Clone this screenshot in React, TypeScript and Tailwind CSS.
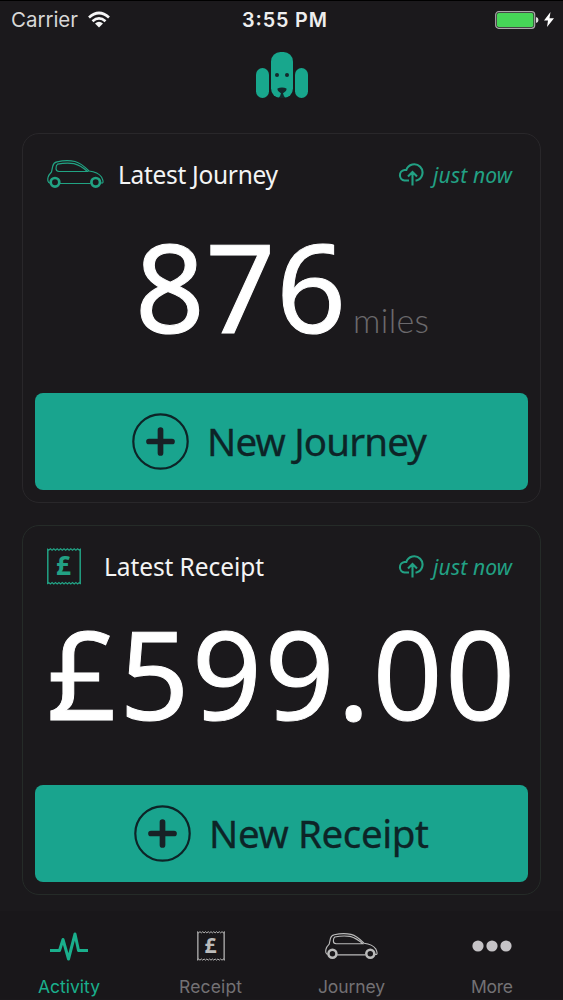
import React from 'react';

type TextProps = { children: string; y: number; height: number; size: number; width: number; className?: string };

function FitText({ children, size, width, height, y, className = '' }: TextProps) {
  return (
    <svg width={width} height={height} className="block shrink-0 overflow-visible">
      <text x="0" y={y} fontSize={size} textLength={width} fill="currentColor" className={className}>
        {children}
      </text>
    </svg>
  );
}

function Car({ className = '' }: { className?: string }) {
  return (
    <svg viewBox="0 0 57 29" fill="none" stroke="currentColor" strokeWidth="1.2" className={className}>
      <path d="M3 23C.8 23 .5 20 1 17.500Q1.500 15 4.500 12L5.800 6Q6.500 2.500 10 1.800Q20-.3 28 1.500Q34 3 42 11Q51 12 54.500 17Q57 22 55.500 23H53.500M13 23.500H43.500" />
      <path d="M10.500 4.200Q19 2.500 27 3.600Q34 5.500 40.500 11.500H12Q9 11.300 9 8.500Q9 5.200 10.500 4.200Z" />
      <circle cx="8" cy="22.300" r="4.300" strokeWidth="2.700" />
      <circle cx="48.700" cy="22.300" r="4.300" strokeWidth="2.700" />
    </svg>
  );
}

function ReceiptIcon({ className = '' }: { className?: string }) {
  return (
    <svg viewBox="0 0 34 37" className={className}>
      <path d="M.8 1V36M33.200 1V36" stroke="currentColor" strokeWidth="1.500" />
      <path d="M0 .8l1.700 1.500 1.700-1.500 1.700 1.500 1.700-1.500 1.700 1.500 1.700-1.500 1.700 1.500 1.700-1.500 1.700 1.500 1.700-1.500 1.700 1.500 1.700-1.500 1.700 1.500 1.700-1.500 1.700 1.500 1.700-1.500 1.700 1.500 1.700-1.500 1.700 1.500 1.700-1.500M0 36l1.700-1.500 1.700 1.500 1.700-1.500 1.700 1.500 1.700-1.500 1.700 1.500 1.700-1.500 1.700 1.500 1.700-1.500 1.700 1.500 1.700-1.500 1.700 1.500 1.700-1.500 1.700 1.500 1.700-1.500 1.700 1.500 1.700-1.500 1.700 1.500 1.700-1.500 1.700 1.500" fill="none" stroke="currentColor" strokeWidth="1.200" />
      <text x="16.500" y="27" textAnchor="middle" fontSize="26" fontWeight="700" fill="currentColor" className="font-['Noto_Sans',sans-serif]">£</text>
    </svg>
  );
}

function Synced() {
  return (
    <div className="flex items-center text-[#22a184]">
      <svg viewBox="0 0 26 24" fill="none" stroke="currentColor" strokeWidth="2.1" className="mr-[9px] h-[24px] w-[26px]">
        <path d="M11 18.500H6.500A5.300 5.300 0 0 1 6.500 8H8.300A8.300 8.300 0 1 1 18.500 18.500H17.500M14.500 23.500V10.500M10 14.500L14.500 10L19 14.500" />
      </svg>
      <FitText size={21} width={79} y={24} height={31} className="italic font-['Noto_Sans',sans-serif]">just now</FitText>
    </div>
  );
}

function ActionButton({ label, width, className }: { label: string; width: number; className: string }) {
  return (
    <button className={`flex h-[97px] w-full items-center rounded-lg bg-[#19a48e] text-[#0d2427] ${className}`}>
      <svg viewBox="0 0 57 57" fill="none" stroke="currentColor" className="mr-[18px] h-[57px] w-[57px]">
        <circle cx="28.500" cy="28.500" r="27.200" strokeWidth="2.200" />
        <path d="M17 28.500H40M28.500 17V40" strokeWidth="5.700" strokeLinecap="round" stroke="#182126" />
      </svg>
      <FitText size={38.5} width={width} y={43} height={58} className="stroke-[#0d2427] [stroke-width:0.3px] font-['Noto_Sans',sans-serif]">{label}</FitText>
    </button>
  );
}

export default function App() {
  return (
    <div className="flex h-[1000px] w-[563px] flex-col overflow-hidden border-t border-black bg-[#1b191c] font-['Noto_Sans',sans-serif]">
      <header className="flex h-[38px] items-center justify-between pr-[9px] pl-[11px] font-['Inter',sans-serif] text-[#eee]">
        <div className="flex w-[182px] items-center gap-[9px] text-[#d8d8d8]">
          <FitText size={20.5} width={67} y={20} height={26.400}>Carrier</FitText>
          <svg viewBox="0 0 24 18" className="h-[18px] w-[24px]" fill="none" stroke="#f5f5f5" strokeWidth="2.700">
            <path d="M2 6.500Q12-2.500 22 6.500M5.500 10.200Q12 4.500 18.500 10.200" />
            <path d="M12 16.500L8 12.500Q12 9 16 12.500Z" fill="#f5f5f5" stroke="none" />
          </svg>
        </div>
        <FitText size={19.8} width={85} y={20} height={26.400} className="font-semibold">3:55 PM</FitText>
        <div className="flex w-[178px] items-center justify-end gap-[5px] pb-[1px]">
          <svg viewBox="0 0 44 18" className="h-[18px] w-[44px]">
            <rect x=".7" y=".7" width="39" height="16.600" rx="3" fill="#242424" stroke="#aaa" strokeWidth="1.200" />
            <rect x="2" y="2" width="36.400" height="14" rx="1.700" fill="#46d657" />
            <path d="M41 6Q43.500 6.500 43.500 9T41 12Z" fill="#ddd" />
          </svg>
          <svg viewBox="0 0 10 15" className="h-[15px] w-[10px]" fill="#fff"><path d="M6.500 0L0 8.500H4L3 15L10 6.300H5.500Z" /></svg>
        </div>
      </header>
      <div className="flex h-[94px] justify-center pt-[13px]">
        <svg viewBox="0 0 52 47" className="h-[47px] w-[52px]" fill="#18a78d">
          <rect x="0" y="16" width="13" height="30" rx="6.500" />
          <rect x="39" y="16" width="13" height="30" rx="6.500" />
          <rect x="15" y="0" width="22" height="46" rx="9.500" />
          <g fill="#14292c">
            <circle cx="21" cy="23" r="2" />
            <circle cx="31" cy="23" r="2" />
            <path d="M21.500 36.500Q23.500 35.500 26 35.500T30.500 36.500Q31 39 27 41.200Q27.500 44 29.500 46H22.500Q24.500 44 25 41.200Q21 39 21.500 36.500Z" />
          </g>
        </svg>
      </div>
      <main className="flex flex-col gap-[22px] px-[22px]">
        <section className="flex h-[370px] flex-col rounded-[17px] border border-[#29272a] px-[12px] pb-[12px]">
          <div className="flex h-[80px] items-center pr-[16px] pl-[12px]">
            <Car className="mr-[14px] h-[29px] w-[57px] text-[#21a383]" />
            <FitText size={24.5} width={160} y={28} height={36} className="fill-[#f4f4f4] font-['Noto_Sans',sans-serif]">Latest Journey</FitText>
            <div className="ml-auto"><Synced /></div>
          </div>
          <div className="flex grow items-start pl-[101px]">
            <svg width="300" height="140" className="overflow-visible">
              <text x="-1" y="119" fontSize="122" textLength="211" fill="#fff" stroke="#fff" strokeWidth="1" className="font-['Noto_Sans',sans-serif]">876</text>
              <text x="217" y="119" fontSize="34" textLength="76" fill="#6b696c" className="font-light font-['Lato',sans-serif]">miles</text>
            </svg>
          </div>
          <ActionButton label="New Journey" width={220} className="pl-[97px]" />
        </section>
        <section className="flex h-[370px] flex-col rounded-[17px] border border-[#252b28] px-[12px] pb-[12px]">
          <div className="flex h-[80px] items-center pr-[16px] pl-[12px]">
            <ReceiptIcon className="mr-[23px] h-[37px] w-[34px] text-[#22a184]" />
            <FitText size={24.5} width={160} y={28} height={36} className="fill-[#f4f4f4] font-['Noto_Sans',sans-serif]">Latest Receipt</FitText>
            <div className="ml-auto"><Synced /></div>
          </div>
          <div className="flex grow items-start pl-[11px]">
            <svg width="470" height="140" className="overflow-visible">
              <text x="1" y="114" fontSize="122" textLength="468" fill="#fff" stroke="#fff" strokeWidth="1" className="font-['Noto_Sans',sans-serif]">£599.00</text>
            </svg>
          </div>
          <ActionButton label="New Receipt" width={220} className="pl-[99px]" />
        </section>
      </main>
      <nav className="mt-[16px] grid h-[88px] grid-cols-4 bg-[#19171a] pr-[1px] font-['Inter',sans-serif] text-[#737174]">
        <div className="flex flex-col items-center pr-[2px] text-[#1aaf8c]">
          <svg viewBox="0 0 38 30" className="mt-[20px] mb-[1px] h-[30px] w-[38px]" fill="none" stroke="currentColor" strokeWidth="3" strokeLinejoin="round"><path d="M0 19.500H9.500L13 8.500L18.500 28L25 3L28.500 19.500H38" /></svg>
          <FitText size={17.5} width={62} y={31} height={36}>Activity</FitText>
        </div>
        <div className="flex flex-col items-center">
          <ReceiptIcon className="mt-[20px] mb-[1px] h-[30px] w-[28px] text-[#bbb]" />
          <FitText size={17.5} width={63} y={31} height={36}>Receipt</FitText>
        </div>
        <div className="flex flex-col items-center">
          <Car className="mt-[21px] mb-[1px] h-[29px] w-[53px] text-[#bbb]" />
          <FitText size={17.5} width={67} y={31} height={36}>Journey</FitText>
        </div>
        <div className="flex flex-col items-center">
          <svg viewBox="0 0 40 12" className="mt-[29px] mb-[10px] h-[12px] w-[40px]" fill="#c5c3c6"><circle cx="6" cy="6" r="5.600" /><circle cx="20" cy="6" r="5.600" /><circle cx="34" cy="6" r="5.600" /></svg>
          <FitText size={17.5} width={42} y={31} height={36}>More</FitText>
        </div>
      </nav>
    </div>
  );
}
